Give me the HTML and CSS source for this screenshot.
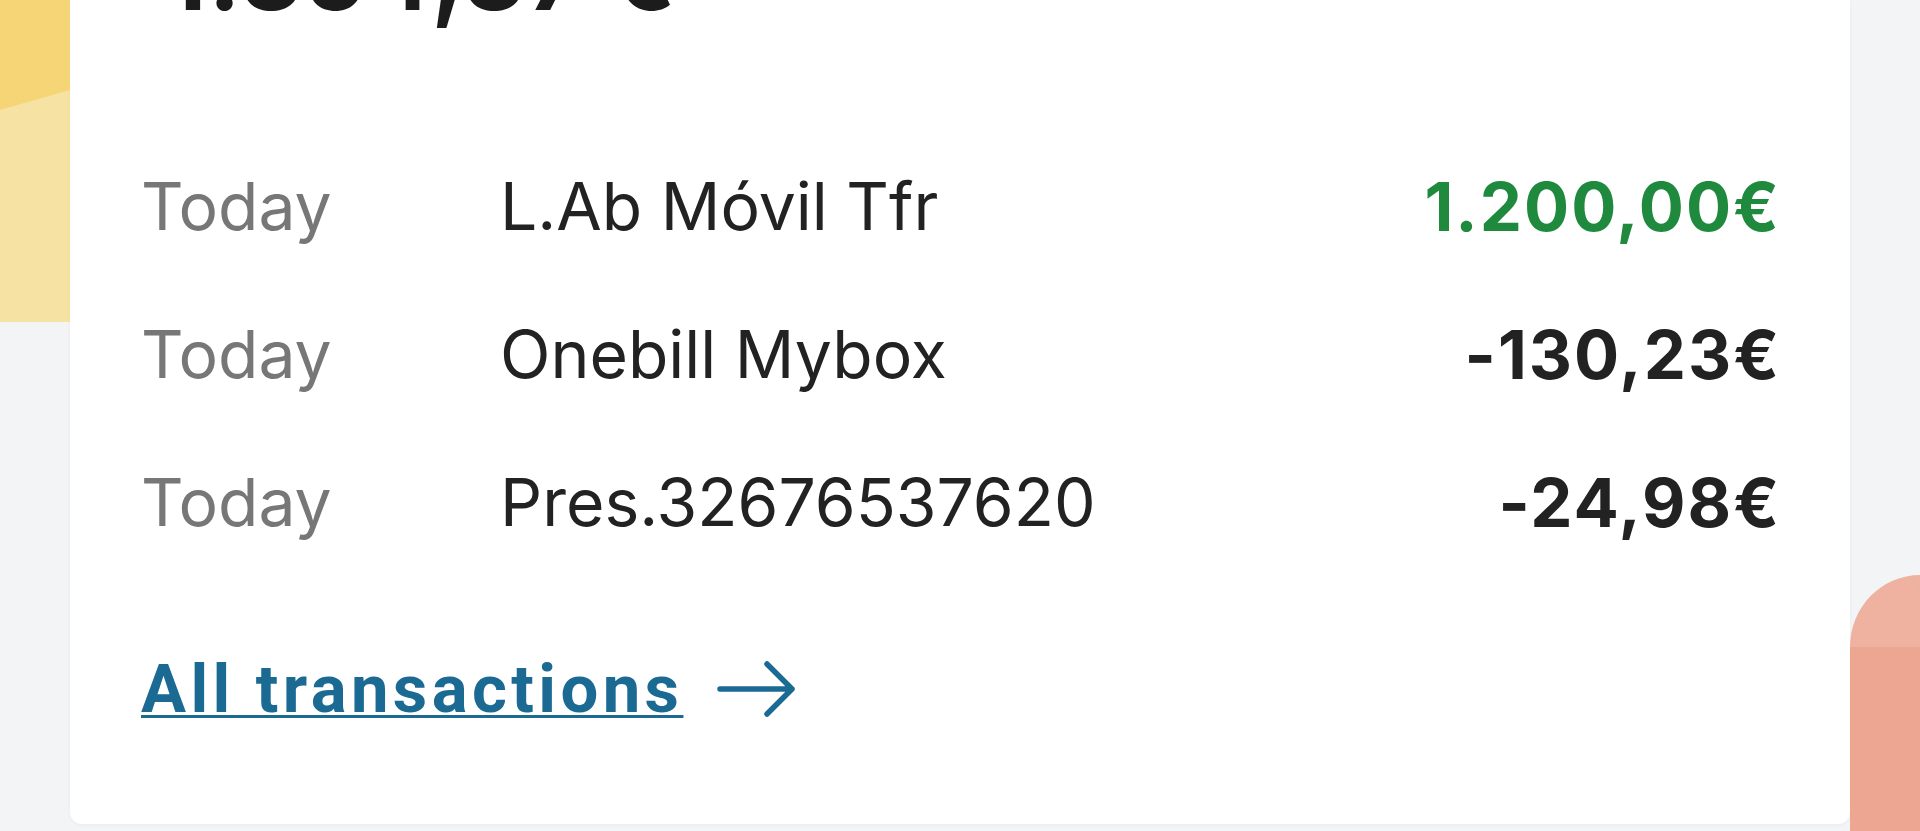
FILE: index.html
```html
<!doctype html>
<html>
<head>
	<meta charset="utf-8" />
	<title>Account - Transactions</title>
	<link rel="stylesheet" href="styles.css">
</head>
<body>
	<div class="page">
		<aside class="side side-left">
			<div class="sun"><div class="sun-top"></div></div>
		</aside>

		<main class="card">
			<div class="balance">1.354,37 €</div>
			<ul class="tx-list">
				<li class="tx">
					<span class="tx-date">Today</span>
					<span class="tx-name">L.Ab Móvil Tfr</span>
					<span class="tx-amount income">1.200,00€</span>
				</li>
				<li class="tx">
					<span class="tx-date">Today</span>
					<span class="tx-name">Onebill Mybox</span>
					<span class="tx-amount">-130,23€</span>
				</li>
				<li class="tx">
					<span class="tx-date">Today</span>
					<span class="tx-name">Pres.32676537620</span>
					<span class="tx-amount">-24,98€</span>
				</li>
			</ul>
			<a class="all-link" href="#">
				<span class="all-link-text">All transactions</span>
				<svg class="arrow" width="80" height="58" viewBox="0 0 80 58" fill="none" stroke="currentColor" stroke-width="5.5" stroke-linecap="round" stroke-linejoin="round">
					<path d="M3 29 H75 M50 4 L75 29 L50 54" />
				</svg>
			</a>
		</main>

		<aside class="side side-right">
			<div class="coral"><div class="coral-peak"></div></div>
		</aside>
	</div>
</body>
</html>
```

FILE: styles.css
```css
html, body { margin: 0; padding: 0; }
body { background: #f3f4f6; font-family: 'Inter', 'Roboto', sans-serif; overflow: hidden; }

.page { display: flex; height: 831px; }

/* decorative side strips */
.side { width: 70px; flex: none; display: flex; flex-direction: column; }
.sun { height: 322px; background: #f6e3a4; }
.sun-top { height: 110px; background: #f6d577; clip-path: polygon(0 0, 100% 0, 100% 90px, 0 110px); }
.side-right { width: 70px; justify-content: flex-end; }
.coral { height: 256px; display: flex; flex-direction: column; }
.coral-peak { height: 72px; background: #efb2a0; border-top-left-radius: 70px 72px; }
.coral::after { content: ''; flex: 1; background: #eca692; }

/* card */
.card { flex: 1; background: #fff; margin-bottom: 7px; border-radius: 0 0 12px 12px; padding: 0 73px 0 71px; box-shadow: 0 1px 4px rgba(0, 0, 0, 0.04); overflow: hidden; }

.balance { font-size: 96px; font-weight: 700; line-height: 1; color: #1c1c1c; margin: -73px 0 0 24px; height: 205px; letter-spacing: 2px; }

.tx-list { list-style: none; margin: 0; padding: 0; }
.tx { display: flex; align-items: center; height: 148px; font-size: 66px; }
.tx-date { width: 359px; color: #777; }
.tx-name { flex: 1; color: #222; }
.tx-amount { font-weight: 700; font-size: 67px; letter-spacing: 2px; margin-right: -4px; color: #222; }
.tx-amount.income { color: #1f8a3d; }

.all-link { display: inline-flex; align-items: center; gap: 34px; margin-top: 74px; color: #1b6a93; text-decoration: none; }
.all-link-text { font-family: 'Roboto', sans-serif; font-weight: 700; font-size: 67px; letter-spacing: 4.4px; text-decoration: underline; text-decoration-thickness: 3px; text-underline-offset: 3px; }
.arrow { display: block; }
```
